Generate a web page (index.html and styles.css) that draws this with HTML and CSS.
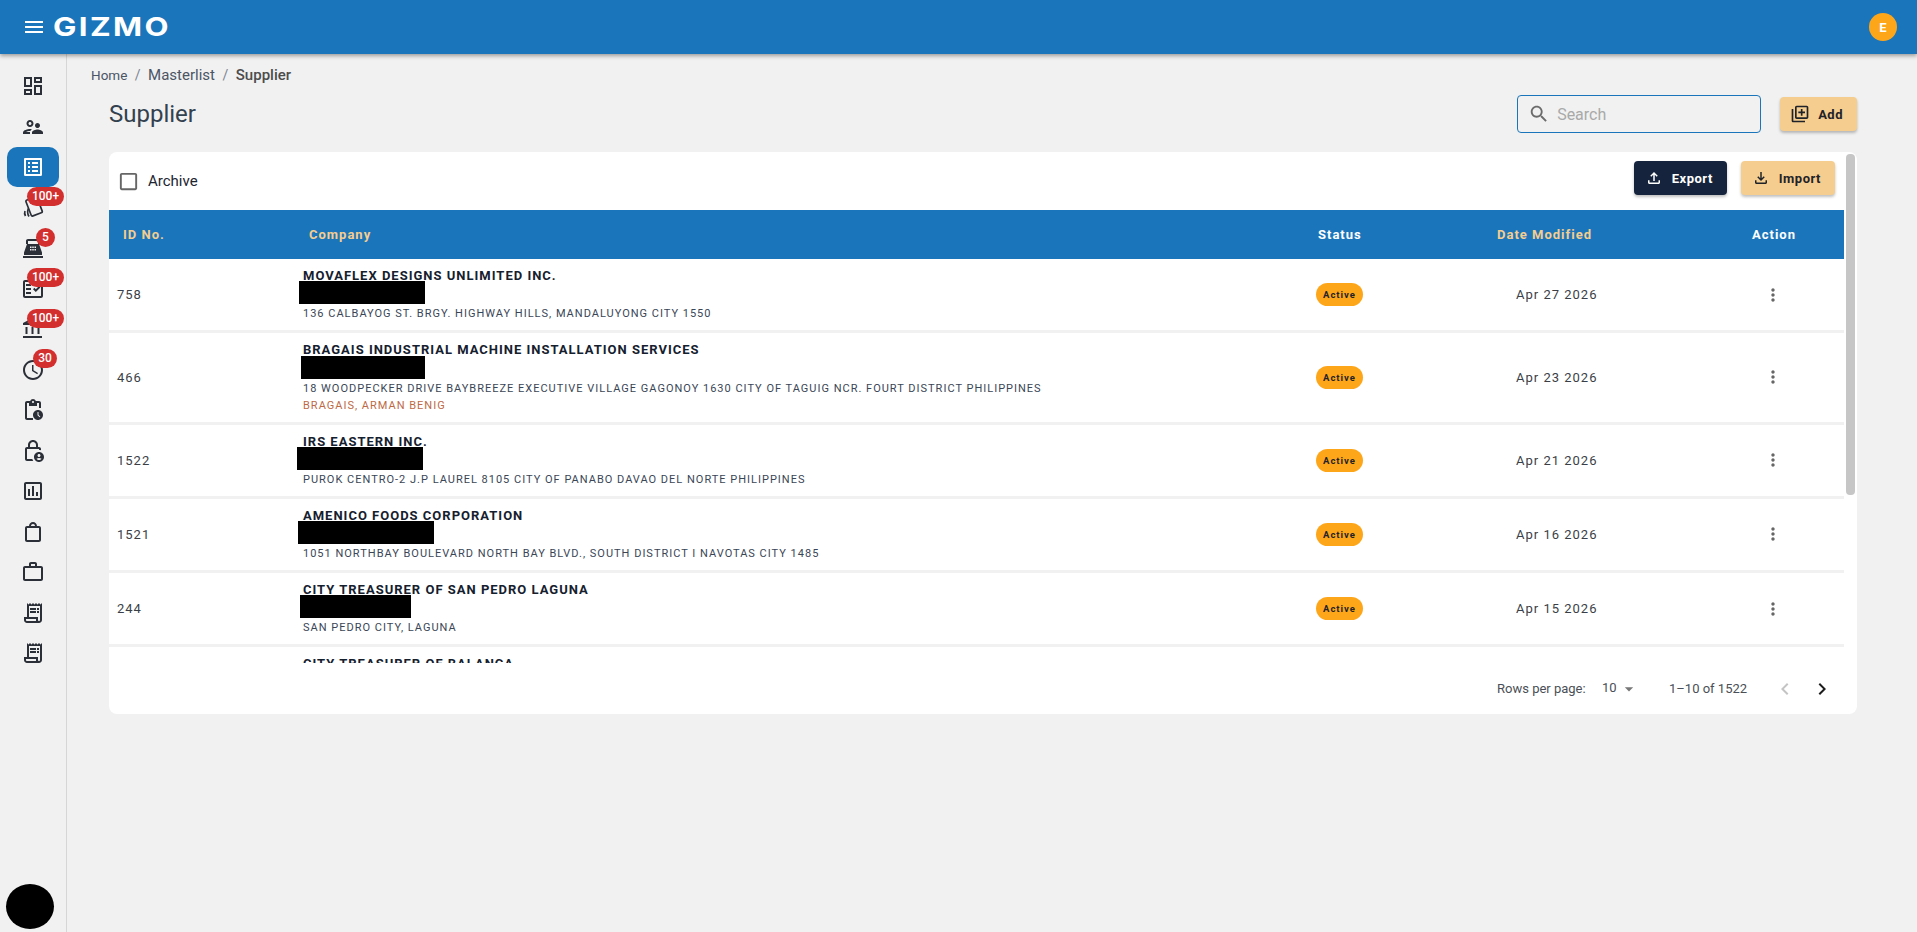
FILE: index.html
```html
<!DOCTYPE html>
<html lang="en">
  <head>
    <meta charset="UTF-8" />
    <meta name="viewport" content="width=device-width, initial-scale=1.0" />
    <title>Gizmo - Supplier</title>
    <link rel="stylesheet" href="styles.css">
  </head>
  <body>
    <header class="topbar">
      <svg class="menu-icon" viewBox="0 0 24 24"><path d="M3 18h18v-2H3v2zm0-5h18v-2H3v2zm0-7v2h18V6H3z"/></svg>
      <span class="logo">GIZMO</span>
      <span class="avatar">E</span>
    </header>

    <div class="layout">
      <aside class="sidebar">
        <a class="nav-item" href="#"><svg viewBox="0 0 24 24"><path d="M19 5v2h-4V5h4M9 5v6H5V5h4m10 8v6h-4v-6h4M9 17v2H5v-2h4M21 3h-8v6h8V3zM11 3H3v10h8V3zm10 8h-8v10h8V11zm-10 4H3v6h8v-6z"/></svg></a>
        <a class="nav-item" href="#"><svg viewBox="0 0 24 24"><path d="M9 12c1.930 0 3.500-1.570 3.500-3.500S10.930 5 9 5 5.500 6.570 5.500 8.500 7.070 12 9 12zm0-5c.83 0 1.500.67 1.500 1.500S9.830 10 9 10s-1.500-.67-1.500-1.500S8.170 7 9 7zm.05 10H4.770c.99-.5 2.700-1 4.230-1 .11 0 .23.010.34.010.34-.73.93-1.330 1.640-1.810-.73-.13-1.420-.2-1.980-.2-2.340 0-7 1.170-7 3.500V19h7v-1.500c0-.17.02-.34.05-.5zm7.450-2.500c-1.840 0-5.500 1.010-5.500 3V19h11v-1.500c0-1.990-3.660-3-5.500-3zm1.210-1.820c.76-.43 1.290-1.240 1.290-2.180C19 9.120 17.880 8 16.500 8S14 9.120 14 10.500c0 .94.530 1.750 1.290 2.180.36.200.77.320 1.210.320s.850-.120 1.210-.320z"/></svg></a>
        <a class="nav-item active" href="#"><svg viewBox="0 0 24 24"><path d="M19 5v14H5V5h14m1.100-2H3.900c-.5 0-.9.4-.9.9v16.200c0 .4.4.9.9.9h16.200c.4 0 .9-.5.9-.9V3.900c0-.5-.5-.9-.9-.9zM11 7h6v2h-6V7zm0 4h6v2h-6v-2zm0 4h6v2h-6zM7 7h2v2H7zm0 4h2v2H7zm0 4h2v2H7z"/></svg></a>
        <a class="nav-item" href="#">
          <svg class="stroked" viewBox="0 0 24 24">
            <rect x="7.200" y="1.900" width="11.800" height="17" rx="1.500" transform="rotate(-21 13.100 10.400)"/>
            <path d="M7.500 12.500Q5.500 16.500 8 20.500M4 15Q3 17.500 4.500 20"/>
          </svg>
          <span class="badge wide">100+</span>
        </a>
        <a class="nav-item" href="#">
          <svg viewBox="0 0 24 24"><path fill-rule="evenodd" d="M7 3h10c1.100 0 2 .9 2 2v3h-2V5H7v3H5V5c0-1.100.9-2 2-2zM6 8h12l3 8.500V19H3v-2.500L6 8zm3 2.500V12h1.500v-1.500H9zm2.250 0V12h1.500v-1.500h-1.500zm2.250 0V12H15v-1.500h-1.500zM9 13v1.500h1.500V13H9zm2.250 0v1.500h1.500V13h-1.500zm2.250 0v1.500H15V13h-1.500zM2 20h20v2H2z"/></svg>
          <span class="badge">5</span>
        </a>
        <a class="nav-item" href="#">
          <svg viewBox="0 0 24 24"><path d="M20 3H4c-1.100 0-2 .9-2 2v14c0 1.100.9 2 2 2h16c1.100 0 2-.9 2-2V5c0-1.100-.9-2-2-2zm0 16H4V5h16v14z"/><path d="M19.410 10.420 17.990 9l-3.170 3.170-1.410-1.420L12 12.170 14.820 15zM5 7h5v2H5zM5 11h5v2H5zM5 15h5v2H5z"/></svg>
          <span class="badge wide">100+</span>
        </a>
        <a class="nav-item" href="#">
          <svg viewBox="0 0 24 24"><path d="M6.500 10h-2v7h2v-7zm6 0h-2v7h2v-7zm8.500 9H2v2h19v-2zm-2.500-9h-2v7h2v-7zm-7-6.740L16.710 6H6.290l5.210-2.740m0-2.260L2 6v2h19V6l-9.500-5z"/></svg>
          <span class="badge wide">100+</span>
        </a>
        <a class="nav-item" href="#">
          <svg viewBox="0 0 24 24"><path d="M11.990 2C6.470 2 2 6.480 2 12s4.470 10 9.990 10C17.520 22 22 17.520 22 12S17.520 2 11.990 2zM12 20c-4.420 0-8-3.580-8-8s3.580-8 8-8 8 3.580 8 8-3.580 8-8 8z"/><path d="M12.500 7H11v6l5.250 3.150.75-1.230-4.500-2.670z"/></svg>
          <span class="badge mid">30</span>
        </a>
        <a class="nav-item" href="#"><svg viewBox="0 0 24 24"><path d="M17 12c-2.760 0-5 2.240-5 5s2.240 5 5 5 5-2.240 5-5-2.240-5-5-5zm1.650 7.350L16.500 17.200V14h1v2.790l1.850 1.850-.7.710zM18 3h-3.180C14.400 1.840 13.300 1 12 1s-2.400.84-2.820 2H6c-1.100 0-2 .9-2 2v15c0 1.100.9 2 2 2h6v-2H6V5h2v3h8V5h2v5h2V5c0-1.100-.9-2-2-2zm-6 2c-.55 0-1-.45-1-1s.45-1 1-1 1 .45 1 1-.45 1-1 1z"/></svg></a>
        <a class="nav-item" href="#"><svg viewBox="0 0 24 24"><path d="M6 20V10h12v1c.7 0 1.370.1 2 .29V10c0-1.100-.9-2-2-2h-1V6c0-2.760-2.240-5-5-5S7 3.240 7 6v2H6c-1.100 0-2 .9-2 2v10c0 1.100.9 2 2 2h6.260c-.42-.6-.75-1.280-.97-2H6zM9 6c0-1.660 1.340-3 3-3s3 1.340 3 3v2H9V6z"/><path d="M18 13c-2.760 0-5 2.240-5 5s2.240 5 5 5 5-2.240 5-5-2.240-5-5-5zm0 2c.83 0 1.500.67 1.500 1.500S18.830 18 18 18s-1.500-.67-1.500-1.500.67-1.500 1.500-1.500zm0 6c-1.030 0-1.940-.52-2.480-1.320.73-.42 1.570-.68 2.480-.68s1.750.26 2.480.68c-.54.8-1.450 1.320-2.480 1.320z"/></svg></a>
        <a class="nav-item" href="#"><svg viewBox="0 0 24 24"><path d="M19 3H5c-1.100 0-2 .9-2 2v14c0 1.100.9 2 2 2h14c1.100 0 2-.9 2-2V5c0-1.100-.9-2-2-2zm0 16H5V5h14v14zM7 10h2v7H7zm4-3h2v10h-2zm4 6h2v4h-2z"/></svg></a>
        <a class="nav-item" href="#"><svg viewBox="0 0 24 24"><path d="M18 6h-2c0-2.210-1.790-4-4-4S8 3.790 8 6H6c-1.100 0-2 .9-2 2v12c0 1.100.9 2 2 2h12c1.100 0 2-.9 2-2V8c0-1.100-.9-2-2-2zm-6-2c1.100 0 2 .9 2 2h-4c0-1.100.9-2 2-2zm6 16H6V8h12v12z"/></svg></a>
        <a class="nav-item" href="#"><svg viewBox="0 0 24 24"><path d="M14 6V4h-4v2h4zM4 8v11h16V8H4zm16-2c1.110 0 2 .89 2 2v11c0 1.110-.89 2-2 2H4c-1.110 0-2-.89-2-2l.01-11c0-1.110.88-2 1.990-2h4V4c0-1.110.89-2 2-2h4c1.110 0 2 .89 2 2v2h4z"/></svg></a>
        <a class="nav-item" href="#"><svg viewBox="0 0 24 24"><path d="M19.500 3.500 18 2l-1.500 1.500L15 2l-1.500 1.500L12 2l-1.500 1.500L9 2 7.500 3.500 6 2v14H3v3c0 1.660 1.340 3 3 3h12c1.660 0 3-1.340 3-3V2l-1.500 1.500zM15 20H6c-.55 0-1-.45-1-1v-1h10v2zm4-1c0 .55-.45 1-1 1s-1-.45-1-1v-3H8V5h11v14zM9 7h6v2H9zM16 7h2v2h-2zM9 10h6v2H9zM16 10h2v2h-2z"/></svg></a>
        <a class="nav-item" href="#"><svg viewBox="0 0 24 24"><path d="M19.500 3.500 18 2l-1.500 1.500L15 2l-1.500 1.500L12 2l-1.500 1.500L9 2 7.500 3.500 6 2v14H3v3c0 1.660 1.340 3 3 3h12c1.660 0 3-1.340 3-3V2l-1.500 1.500zM15 20H6c-.55 0-1-.45-1-1v-1h10v2zm4-1c0 .55-.45 1-1 1s-1-.45-1-1v-3H8V5h11v14zM9 7h6v2H9zM16 7h2v2h-2zM9 10h6v2H9zM16 10h2v2h-2z"/></svg></a>
        <div class="user-photo"></div>
      </aside>

      <main class="content">
        <div class="breadcrumb">
          <a class="crumb-home" href="#">Home</a>
          <span class="crumb-sep">/</span>
          <a class="crumb-link" href="#">Masterlist</a>
          <span class="crumb-sep">/</span>
          <strong>Supplier</strong>
        </div>

        <div class="page-head">
          <h1>Supplier</h1>
          <label class="search">
            <svg viewBox="0 0 24 24"><path d="M15.500 14h-.79l-.28-.27C15.410 12.590 16 11.110 16 9.500 16 5.910 13.090 3 9.500 3S3 5.910 3 9.500 5.910 16 9.500 16c1.610 0 3.090-.59 4.230-1.570l.27.28v.79l5 4.990L20.490 19l-4.990-5zm-6 0C7.010 14 5 11.990 5 9.500S7.010 5 9.500 5 14 7.010 14 9.500 11.990 14 9.500 14z"/></svg>
            <input type="text" placeholder="Search" />
          </label>
          <button class="btn btn-gold btn-add">
            <svg viewBox="0 0 24 24"><path d="M4 6H2v14c0 1.100.9 2 2 2h14v-2H4V6zm16-4H8c-1.100 0-2 .9-2 2v12c0 1.100.9 2 2 2h12c1.100 0 2-.9 2-2V4c0-1.100-.9-2-2-2zm0 14H8V4h12v12zm-7-2h2v-3h3V9h-3V6h-2v3h-3v2h3z"/></svg>
            Add
          </button>
        </div>

        <section class="card">
          <div class="scroll-thumb"></div>
          <div class="scroller">
            <div class="toolbar">
              <label class="archive">
                <svg viewBox="0 0 24 24"><path d="M19 5v14H5V5h14m0-2H5c-1.100 0-2 .9-2 2v14c0 1.100.9 2 2 2h14c1.100 0 2-.9 2-2V5c0-1.100-.9-2-2-2z"/></svg>
                Archive
              </label>
              <div class="toolbar-actions">
                <button class="btn btn-dark">
                  <svg viewBox="0 0 24 24"><path d="M18 15v3H6v-3H4v3c0 1.100.9 2 2 2h12c1.100 0 2-.9 2-2v-3h-2zM7 9l1.410 1.410L11 7.830V16h2V7.830l2.590 2.580L17 9l-5-5-5 5z"/></svg>
                  Export
                </button>
                <button class="btn btn-gold">
                  <svg viewBox="0 0 24 24"><path d="M18 15v3H6v-3H4v3c0 1.100.9 2 2 2h12c1.100 0 2-.9 2-2v-3h-2zm-1-4-1.410-1.410L13 12.170V4h-2v8.170L8.410 9.590 7 11l5 5 5-5z"/></svg>
                  Import
                </button>
              </div>
            </div>

            <div class="table-head row-grid">
              <span class="head-id gold">ID No.</span>
              <span class="head-company gold">Company</span>
              <span class="head-status">Status</span>
              <span class="gold">Date Modified</span>
              <span>Action</span>
            </div>

            <div class="table-row row-grid">
              <span class="cell-id">758</span>
              <div class="company">
                <div class="company-name">MOVAFLEX DESIGNS UNLIMITED INC.</div>
                <div class="redact redact-1"></div>
                <div class="company-line">136 CALBAYOG ST. BRGY. HIGHWAY HILLS, MANDALUYONG CITY 1550</div>
              </div>
              <span class="chip-cell"><span class="chip">Active</span></span>
              <span class="cell-date">Apr 27 2026</span>
              <svg class="more" viewBox="0 0 24 24"><path d="M12 8c1.100 0 2-.9 2-2s-.9-2-2-2-2 .9-2 2 .9 2 2 2zm0 2c-1.100 0-2 .9-2 2s.9 2 2 2 2-.9 2-2-.9-2-2-2zm0 6c-1.100 0-2 .9-2 2s.9 2 2 2 2-.9 2-2-.9-2-2-2z"/></svg>
            </div>

            <div class="table-row row-grid">
              <span class="cell-id">466</span>
              <div class="company">
                <div class="company-name">BRAGAIS INDUSTRIAL MACHINE INSTALLATION SERVICES</div>
                <div class="redact redact-2"></div>
                <div class="company-line">18 WOODPECKER DRIVE BAYBREEZE EXECUTIVE VILLAGE GAGONOY 1630 CITY OF TAGUIG NCR. FOURT DISTRICT PHILIPPINES</div>
                <div class="company-line contact">BRAGAIS, ARMAN BENIG</div>
              </div>
              <span class="chip-cell"><span class="chip">Active</span></span>
              <span class="cell-date">Apr 23 2026</span>
              <svg class="more" viewBox="0 0 24 24"><path d="M12 8c1.100 0 2-.9 2-2s-.9-2-2-2-2 .9-2 2 .9 2 2 2zm0 2c-1.100 0-2 .9-2 2s.9 2 2 2 2-.9 2-2-.9-2-2-2zm0 6c-1.100 0-2 .9-2 2s.9 2 2 2 2-.9 2-2-.9-2-2-2z"/></svg>
            </div>

            <div class="table-row row-grid">
              <span class="cell-id">1522</span>
              <div class="company">
                <div class="company-name">IRS EASTERN INC.</div>
                <div class="redact redact-3"></div>
                <div class="company-line">PUROK CENTRO-2 J.P LAUREL 8105 CITY OF PANABO DAVAO DEL NORTE PHILIPPINES</div>
              </div>
              <span class="chip-cell"><span class="chip">Active</span></span>
              <span class="cell-date">Apr 21 2026</span>
              <svg class="more" viewBox="0 0 24 24"><path d="M12 8c1.100 0 2-.9 2-2s-.9-2-2-2-2 .9-2 2 .9 2 2 2zm0 2c-1.100 0-2 .9-2 2s.9 2 2 2 2-.9 2-2-.9-2-2-2zm0 6c-1.100 0-2 .9-2 2s.9 2 2 2 2-.9 2-2-.9-2-2-2z"/></svg>
            </div>

            <div class="table-row row-grid">
              <span class="cell-id">1521</span>
              <div class="company">
                <div class="company-name">AMENICO FOODS CORPORATION</div>
                <div class="redact redact-4"></div>
                <div class="company-line">1051 NORTHBAY BOULEVARD NORTH BAY BLVD., SOUTH DISTRICT I NAVOTAS CITY 1485</div>
              </div>
              <span class="chip-cell"><span class="chip">Active</span></span>
              <span class="cell-date">Apr 16 2026</span>
              <svg class="more" viewBox="0 0 24 24"><path d="M12 8c1.100 0 2-.9 2-2s-.9-2-2-2-2 .9-2 2 .9 2 2 2zm0 2c-1.100 0-2 .9-2 2s.9 2 2 2 2-.9 2-2-.9-2-2-2zm0 6c-1.100 0-2 .9-2 2s.9 2 2 2 2-.9 2-2-.9-2-2-2z"/></svg>
            </div>

            <div class="table-row row-grid">
              <span class="cell-id">244</span>
              <div class="company">
                <div class="company-name">CITY TREASURER OF SAN PEDRO LAGUNA</div>
                <div class="redact redact-5"></div>
                <div class="company-line">SAN PEDRO CITY, LAGUNA</div>
              </div>
              <span class="chip-cell"><span class="chip">Active</span></span>
              <span class="cell-date">Apr 15 2026</span>
              <svg class="more" viewBox="0 0 24 24"><path d="M12 8c1.100 0 2-.9 2-2s-.9-2-2-2-2 .9-2 2 .9 2 2 2zm0 2c-1.100 0-2 .9-2 2s.9 2 2 2 2-.9 2-2-.9-2-2-2zm0 6c-1.100 0-2 .9-2 2s.9 2 2 2 2-.9 2-2-.9-2-2-2z"/></svg>
            </div>

            <div class="table-row row-grid">
              <span class="cell-id"></span>
              <div class="company">
                <div class="company-name">CITY TREASURER OF BALANCA</div>
              </div>
            </div>
          </div>

          <div class="pagination">
            <span class="rows-label">Rows per page:</span>
            <span class="rows-value">10</span>
            <svg class="rows-arrow" viewBox="0 0 24 24"><path d="M7 10l5 5 5-5z"/></svg>
            <span class="range">1–10 of 1522</span>
            <svg class="page-prev" viewBox="0 0 24 24"><path d="M15.410 7.410 14 6l-6 6 6 6 1.410-1.410L10.830 12z"/></svg>
            <svg class="page-next" viewBox="0 0 24 24"><path d="M10 6 8.590 7.410 13.170 12l-4.580 4.590L10 18l6-6z"/></svg>
          </div>
        </section>
      </main>
    </div>
  </body>
</html>
```

FILE: styles.css
```css
/* General page */
html,
body {
  height: 100%;
}
body {
  font-family: Roboto, "Liberation Sans", sans-serif;
  margin: 0;
  padding: 0;
  background-color: #f1f1f1;
  color: #1d2530;
  overflow: hidden;
  display: flex;
  flex-direction: column;
}
a {
  color: inherit;
  text-decoration: none;
}

/* Top bar */
.topbar {
  flex: none;
  height: 54px;
  background: #1a75bb;
  display: flex;
  align-items: center;
  padding: 0 20px 0 22px;
  box-shadow: 0 2px 4px rgba(0, 0, 0, 0.35);
  position: relative;
  z-index: 2;
}
.menu-icon {
  width: 24px;
  height: 24px;
  fill: #fff;
}
.logo {
  margin-left: 7px;
  font-family: Inter, sans-serif;
  font-weight: 700;
  font-size: 26px;
  line-height: 1;
  letter-spacing: 2px;
  color: #fff;
  transform: scaleX(1.2);
  transform-origin: left center;
}
.avatar {
  margin-left: auto;
  width: 28px;
  height: 28px;
  border-radius: 50%;
  background: #fea61a;
  color: #fff;
  font-size: 13px;
  font-weight: 700;
  display: flex;
  align-items: center;
  justify-content: center;
}

.layout {
  flex: 1;
  display: flex;
  min-height: 0;
}

/* Sidebar */
.sidebar {
  flex: none;
  width: 66px;
  border-right: 1px solid #d6d6d6;
  padding-top: 11.75px;
  display: flex;
  flex-direction: column;
  align-items: flex-start;
}
.nav-item {
  position: relative;
  width: 52px;
  height: 40.5px;
  margin-left: 7px;
  border-radius: 10px;
  display: flex;
  align-items: center;
  justify-content: center;
}
.nav-item svg {
  width: 24px;
  height: 24px;
  fill: #2b2f38;
}
.nav-item svg.stroked {
  fill: none;
  stroke: #2b2f38;
  stroke-width: 1.700;
}
.nav-item.active {
  background: #1a75bb;
}
.nav-item.active svg {
  fill: #fff;
}
.badge {
  position: absolute;
  top: 0;
  left: 29px;
  width: 19px;
  height: 19px;
  border-radius: 10px;
  background: #d32f2f;
  color: #fff;
  font-size: 12px;
  font-weight: 500;
  line-height: 19px;
  text-align: center;
}
.badge.wide {
  left: 20px;
  width: 37px;
}
.badge.mid {
  left: 26px;
  width: 24px;
}
.user-photo {
  width: 48px;
  height: 45px;
  border-radius: 50%;
  background: #000;
  margin: auto 0 3px 5.5px;
}

/* Main content */
.content {
  flex: 1;
  min-width: 0;
  padding: 12px 60px 0 24px;
}
.breadcrumb {
  height: 18px;
  display: flex;
  align-items: center;
  color: #4a5566;
  font-size: 15px;
}
.crumb-home {
  font-size: 13.5px;
}
.crumb-sep {
  margin: 0 7.5px;
  color: #7b8491;
  font-size: 14px;
}
.breadcrumb strong {
  font-weight: 500;
  color: #4c4c4c;
}
.page-head {
  margin: 11px 0 19px 18px;
  height: 38px;
  display: flex;
  align-items: center;
}
.page-head h1 {
  margin: 0;
  font-size: 24px;
  font-weight: 400;
  color: #33414f;
}
.search {
  margin-left: auto;
  width: 244px;
  height: 38px;
  box-sizing: border-box;
  border: 1px solid #1a75bb;
  border-radius: 4px;
  display: flex;
  align-items: center;
  padding-left: 10px;
}
.search svg {
  width: 22px;
  height: 22px;
  fill: #6b6b6b;
  flex: none;
}
.search input {
  border: none;
  outline: none;
  background: transparent;
  margin-left: 7px;
  width: 170px;
  padding: 0;
  font-family: inherit;
  font-size: 16px;
}
.search input::placeholder {
  color: #a9a9a9;
}

/* Buttons */
.btn {
  border: none;
  border-radius: 4px;
  height: 34px;
  display: flex;
  align-items: center;
  font-family: inherit;
  font-size: 13px;
  font-weight: 700;
  letter-spacing: 0.5px;
  padding: 0 14px 0 11px;
  box-shadow: 0 2px 3px rgba(0, 0, 0, 0.25);
}
.btn svg {
  width: 18px;
  height: 18px;
  margin-right: 9px;
  fill: currentColor;
}
.btn-gold {
  background: #f5cd8f;
  color: #1f2329;
}
.btn-dark {
  background: #15243c;
  color: #fff;
}
.btn-add {
  margin-left: 19px;
  padding-left: 10px;
}
.btn-add svg {
  width: 20px;
  height: 20px;
  margin-right: 8px;
}

/* Supplier card */
.card {
  position: relative;
  margin-left: 18px;
  height: 562px;
  background: #fff;
  border-radius: 8px;
  display: flex;
  flex-direction: column;
}
.scroller {
  flex: 1;
  min-height: 0;
  overflow: hidden;
  margin-right: 13px;
}
.scroll-thumb {
  position: absolute;
  top: 2px;
  right: 2px;
  width: 9px;
  height: 341px;
  border-radius: 4px;
  background: #c6c6c6;
}
.toolbar {
  height: 58px;
  display: flex;
  align-items: center;
  justify-content: space-between;
  padding: 0 9px;
}
.archive {
  display: flex;
  align-items: center;
  font-size: 15px;
  color: #1d2530;
}
.archive svg {
  width: 23px;
  height: 23px;
  fill: #666;
  margin-right: 8px;
  margin-left: -1px;
}
.toolbar-actions {
  display: flex;
  gap: 14px;
  margin-bottom: 6px;
}

/* Table */
.row-grid {
  display: grid;
  grid-template-columns: 194px 1013px 181px 255px 92px;
  align-items: center;
}
.table-head {
  height: 49px;
  background: #1a75bb;
  color: #fff;
  font-size: 13px;
  font-weight: 700;
  letter-spacing: 1px;
}
.gold {
  color: #f5cd8f;
}
.head-id {
  padding-left: 14px;
}
.head-company {
  padding-left: 6px;
}
.head-status {
  padding-left: 2px;
}
.table-row {
  margin-bottom: 3px;
  background: #fff;
  box-shadow: 0 3px 0 #f1f1f1;
}
.cell-id {
  padding-left: 8px;
  font-size: 13px;
  letter-spacing: 1px;
  color: #3a3f47;
}
.company {
  padding: 9px 0 8px;
}
.company-name {
  font-size: 13px;
  font-weight: 700;
  line-height: 16.25px;
  letter-spacing: 1px;
  color: #15202e;
}
.company-line {
  font-size: 11px;
  line-height: 16px;
  letter-spacing: 1px;
  color: #3a4656;
  white-space: nowrap;
}
.contact {
  margin-top: 1px;
  color: #bd6a45;
}
.redact {
  position: relative;
  height: 23px;
  margin: -3px 0 2px;
  background: #000;
}
.redact-1 {
  width: 126px;
  margin-left: -4px;
}
.redact-2 {
  width: 124px;
  margin-left: -2px;
}
.redact-3 {
  width: 126px;
  margin-left: -6px;
}
.redact-4 {
  width: 136px;
  margin-left: -5px;
}
.redact-5 {
  width: 111px;
  margin-left: -3px;
}
.chip-cell {
  display: flex;
}
.chip {
  width: 47px;
  height: 23px;
  border-radius: 12px;
  background: #fea61a;
  color: #1f2329;
  font-size: 9.5px;
  font-weight: 700;
  letter-spacing: 1px;
  line-height: 23px;
  text-align: center;
}
.cell-date {
  padding-left: 19px;
  font-size: 13px;
  letter-spacing: 1px;
  color: #3a3f47;
}
.more {
  width: 20px;
  height: 20px;
  margin-left: 11px;
  fill: #666;
}

/* Pagination */
.pagination {
  flex: none;
  height: 51px;
  display: flex;
  align-items: center;
  padding-left: 1388px;
  font-size: 13px;
  color: #4a4f57;
}
.rows-label {
  width: 105px;
}
.rows-value {
  width: 15px;
  margin-top: -2px;
}
.rows-arrow {
  width: 20px;
  height: 20px;
  margin-left: 2px;
  fill: #777;
}
.range {
  width: 79px;
  margin-left: 30px;
  white-space: nowrap;
}
.page-prev,
.page-next {
  width: 24px;
  height: 24px;
}
.page-prev {
  margin-left: 25px;
  fill: #c4c4c4;
}
.page-next {
  margin-left: 13px;
  fill: #1d1d1d;
}
```
